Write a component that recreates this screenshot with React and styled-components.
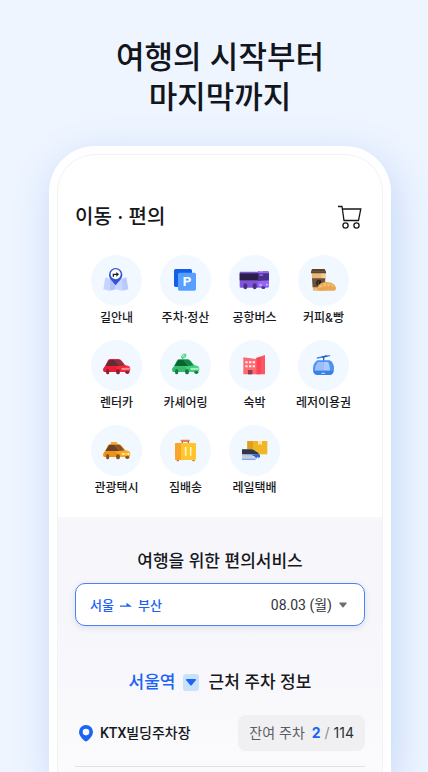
import React from "react";
import styled, { createGlobalStyle } from "styled-components";

const GlobalStyle = createGlobalStyle`
  * {
    box-sizing: border-box;
  }
  body {
    margin: 0;
    color: #17181c;
    font-family: Inter, "Noto Sans CJK KR", sans-serif;
    background: #eef5ff;
  }
  h1, h2, p, ul {
    margin: 0;
    padding: 0;
  }
  button {
    font-family: inherit;
    color: inherit;
    cursor: pointer;
  }
`;

// rent / sharing / taxi all use the same car with other colours
function Car({ body, shade, glass, glassDark, light, wheel }) {
  return (
    <>
      <path d="M37 86 L42 79 L51 61 Q53 57 58 57 L83 57 Q88 57 92 62 L102 75 L113 78 Q118 80 118 86 L117 93 Q116 96 112 96 L41 96 Q37 96 37 91 Z" fill={body} />
      <path d="M37 86 L42 79 L76 79 L80 96 L41 96 Q37 96 37 91 Z" fill={shade} />
      <path d="M43 78 L52 63 Q54 59 58 59 L70 59 L86 78 Z" fill={glassDark} />
      <path d="M70 59 L83 59 Q87 59 90 63 L101 76 L86 78 Z" fill={glass} />
      <path d="M91 84 L116 83 L116 89 L93 90 Z" fill={light} />
      <ellipse cx="50" cy="95" rx="5" ry="8" fill={wheel} />
      <ellipse cx="81" cy="95" rx="6" ry="8" fill={wheel} />
      <ellipse cx="109" cy="97" rx="6" ry="5" fill={wheel} />
    </>
  );
}

const icons = {
  map: (
    <>
      <path d="M43 67 L56 71 L56 107 L37 103 Z" fill="#c6d3ff" />
      <path d="M56 71 L74 67 L74 103 L56 107 Z" fill="#b3c4fd" />
      <path d="M74 67 L93 71 L94 107 L74 103 Z" fill="#c9d6ff" />
      <path d="M93 71 L106 67 L112 103 L94 107 Z" fill="#b9c9ff" />
      <path d="M74 91 C68 81 54 73 54 59 A20 20 0 0 1 94 59 C94 73 80 81 74 91 Z" fill="#2f55d4" />
      <circle cx="74" cy="58" r="15" fill="#fff" />
      <path d="M67 65 V58 H77" stroke="#1c1d22" strokeWidth="4" fill="none" />
      <path d="M76 51 L84 58 L76 65 Z" fill="#1c1d22" />
    </>
  ),
  parking: (
    <>
      <rect x="42" y="42" width="54" height="54" rx="5" fill="#1260e8" />
      <rect x="54" y="53" width="54" height="54" rx="5" fill="#58a0ff" />
      <text x="81" y="94" textAnchor="middle" fontSize="40" fontWeight="700" fontFamily="Roboto, sans-serif" fill="#fff">P</text>
    </>
  ),
  bus: (
    <>
      <path d="M32 53 Q32 50 35 50 H87 V98 H35 Q32 98 32 95 Z" fill="#8055dd" />
      <path d="M87 48 H116 Q120 48 120 53 V94 Q120 98 116 98 H87 Z" fill="#9467f7" />
      <rect x="32" y="55" width="55" height="21" fill="#2a1f45" />
      <path d="M87 55 H120 V76 L87 78 Z" fill="#49308a" />
      <path d="M91 50 H102 M91 60 H102" stroke="#b597ff" strokeWidth="3" />
      <path d="M91 90 H99 M111 89 H118" stroke="#ccb5ff" strokeWidth="4" />
      <ellipse cx="49" cy="94" rx="6" ry="9" fill="#4b3183" />
      <ellipse cx="77" cy="94" rx="6" ry="9" fill="#4b3183" />
      <ellipse cx="103" cy="98" rx="6" ry="4" fill="#4b3183" />
    </>
  ),
  coffee: (
    <>
      <path d="M41 54 H83 L79 107 H45 Z" fill="#e8b878" />
      <path d="M70 54 H83 L79 107 H70 Z" fill="#f3cd94" />
      <path d="M42 42 H80 L84 50 V55 H39 V50 Z" fill="#5b432e" />
      <path d="M40 50 H84" stroke="#7a5d42" strokeWidth="2" />
      <path d="M42 70 H82 L80 97 H44 Z" fill="#67523c" />
      <ellipse cx="62" cy="83" rx="7" ry="9" transform="rotate(22 62 83)" fill="#271c13" />
      <path d="M64 77 Q58 83 61 90" stroke="#846b4e" strokeWidth="2" fill="none" />
      <path d="M58 101 C58 88 71 81 86 81 C103 81 114 91 114 101 Q114 107 106 107 H65 Q58 107 58 101 Z" fill="#e9a552" />
      <path d="M61 99 C65 89 75 84 86 84 C98 84 107 89 110 96 Q88 90 61 99 Z" fill="#f5be70" />
      <path d="M73 87 L76 96 M85 84 L87 95 M97 86 L98 96" stroke="#d98c38" strokeWidth="2" />
    </>
  ),
  rent: <Car body="#f5293e" shade="#e91d36" glass="#83343d" glassDark="#652a33" light="#ff8b94" wheel="#88212f" />,
  share: (
    <>
      <Car body="#43ce7c" shade="#33bd6c" glass="#168346" glassDark="#0c6433" light="#a4f0c4" wheel="#187842" />
      <path d="M65 53 Q63 43 77 42 Q79 55 67 54 Z" fill="#caf4db" stroke="#3ccb76" strokeWidth="3" />
      <path d="M74 46 L66 57" stroke="#3ccb76" strokeWidth="3" />
    </>
  ),
  hotel: (
    <>
      <path d="M43 52 L82 57 V103 H43 Z" fill="#ff6971" />
      <path d="M82 54 L108 45 V103 H82 Z" fill="#ff5562" />
      <path d="M82 54 L95 50 V103 H82 Z" fill="#fb4456" />
      <path d="M49 67 H56 M60 67 H67 M71 67 H78 M49 79 H56 M60 79 H67 M71 79 H78" stroke="#fff0f0" strokeWidth="6" />
      <rect x="57" y="90" width="13" height="13" fill="#8e4145" />
    </>
  ),
  gondola: (
    <>
      <path d="M58 54 L95 47" stroke="#4588ea" strokeWidth="4" strokeLinecap="round" />
      <path d="M73 51 L86 48" stroke="#2560ca" strokeWidth="5" strokeLinecap="round" />
      <path d="M77 50 V63" stroke="#2860c8" strokeWidth="4" />
      <path d="M58 61 H95 Q108 68 108 85 Q108 105 94 105 H60 Q45 105 45 86 Q45 70 58 61 Z" fill="#4c92f4" />
      <path d="M60 66 H76 V92 H51 Q50 75 60 66 Z" fill="#9bbef5" />
      <path d="M76 66 H91 Q96 78 96 92 H76 Z" fill="#adcafa" />
      <path d="M46 92 H107 Q105 105 94 105 H60 Q48 105 46 92 Z" fill="#3a80e9" />
      <path d="M70 100 H81" stroke="#cce3ff" strokeWidth="3" />
    </>
  ),
  taxi: (
    <>
      <rect x="59" y="51" width="20" height="9" rx="3" fill="#f7a928" />
      <Car body="#fba91c" shade="#ef9316" glass="#885031" glassDark="#6c402b" light="#ffc857" wheel="#87502b" />
      <circle cx="96" cy="87" r="3" fill="#fff6cf" />
      <circle cx="112" cy="87" r="3" fill="#fff6cf" />
    </>
  ),
  luggage: (
    <>
      <path d="M67 56 V48 H85 V56" stroke="#b6682f" strokeWidth="4" fill="none" />
      <path d="M62 47 H89" stroke="#e8805a" strokeWidth="5" />
      <rect x="45" y="54" width="63" height="51" rx="4" fill="#ffc52c" />
      <path d="M49 54 H63 V105 H49 Q45 105 45 101 V58 Q45 54 49 54 Z" fill="#f9a42a" />
      <path d="M77 66 V92 M92 66 V92" stroke="#fff4c5" strokeWidth="5" />
      <path d="M50 107 H57 M97 107 H104" stroke="#d9772a" strokeWidth="4" />
    </>
  ),
  delivery: (
    <>
      <rect x="55" y="48" width="60" height="40" fill="#f1b626" />
      <rect x="55" y="48" width="17" height="40" fill="#dda11d" />
      <path d="M87 48 H99 V60 L93 57 L87 60 Z" fill="#ffe6a3" />
      <path d="M39 73 H68 Q85 78 93 91 Q94 98 87 102 H39 Z" fill="#c6d0e3" />
      <path d="M39 73 H68 Q84 78 92 89 L39 87 Z" fill="#303746" />
      <path d="M68 89 L92 89 Q96 96 89 98 H79 L73 93 Z" fill="#2464dc" />
      <path d="M39 89 H68" stroke="#7f9fd8" strokeWidth="2" />
      <path d="M73 94 L79 98 M88 97 L84 99" stroke="#fff" strokeWidth="3" />
      <path d="M39 103 H80" stroke="#6997e9" strokeWidth="3" />
    </>
  ),
};

const services = [
  { icon: "map", label: "길안내" },
  { icon: "parking", label: "주차·정산" },
  { icon: "bus", label: "공항버스" },
  { icon: "coffee", label: "커피&빵" },
  { icon: "rent", label: "렌터카" },
  { icon: "share", label: "카셰어링" },
  { icon: "hotel", label: "숙박" },
  { icon: "gondola", label: "레저이용권" },
  { icon: "taxi", label: "관광택시" },
  { icon: "luggage", label: "짐배송" },
  { icon: "delivery", label: "레일택배" },
];

function App() {
  return (
    <>
      <GlobalStyle />
      <Page>
        <Title>
          여행의 시작부터
          <br />
          마지막까지
        </Title>

        <Phone>
          <Screen>
            <Header>
              <HeaderTitle>이동 · 편의</HeaderTitle>
              <CartButton type="button" aria-label="장바구니">
                <svg width="24" height="24" viewBox="0 0 24 24" fill="none" stroke="#17181c" strokeWidth="1.3">
                  <path d="M0 1.5 H4 L6 15.5 H20.5 L22.8 4 H4.4" />
                  <circle cx="7.5" cy="20.5" r="2.6" />
                  <circle cx="18.5" cy="20.5" r="2.6" />
                </svg>
              </CartButton>
            </Header>

            <ServiceGrid>
              {services.map((s) => (
                <li key={s.icon}>
                  <Service href="#">
                    <IconCircle viewBox="0 0 153 153" aria-hidden="true">
                      {icons[s.icon]}
                    </IconCircle>
                    {s.label}
                  </Service>
                </li>
              ))}
            </ServiceGrid>

            <Travel>
              <SectionTitle>여행을 위한 편의서비스</SectionTitle>
              <TripButton type="button">
                <Route>
                  서울
                  <svg width="12" height="6" viewBox="0 0 12 6" aria-hidden="true">
                    <path d="M0 4.8 H12 L6.5 0.8 V3.6 H0 Z" fill="#1b64f5" />
                  </svg>
                  부산
                </Route>
                <TripDate>
                  08.03 (월)
                  <svg width="8" height="6" viewBox="0 0 8 6" aria-hidden="true">
                    <path d="M0.8 0.5 H7.2 Q8 0.6 7.5 1.4 L4.5 5.2 Q4 5.6 3.5 5.2 L0.5 1.4 Q0 0.6 0.8 0.5 Z" fill="#6b6c74" />
                  </svg>
                </TripDate>
              </TripButton>

              <StationTitle>
                <Blue>서울역</Blue>
                <StationButton type="button" aria-label="역 선택">
                  <svg width="10" height="7" viewBox="0 0 10 7">
                    <path d="M0.8 0 H9.2 Q10.3 0.2 9.7 1.2 L5.7 6.2 Q5 6.8 4.3 6.2 L0.3 1.2 Q-0.3 0.2 0.8 0 Z" fill="#1b64f5" />
                  </svg>
                </StationButton>
                근처 주차 정보
              </StationTitle>

              <ParkingRow>
                <ParkingName>
                  <svg width="14" height="17" viewBox="0 0 14 17" aria-hidden="true">
                    <path d="M7 16.6 C6 16.6 0 11.5 0 7 A7 7 0 0 1 14 7 C14 11.5 8 16.6 7 16.6 Z M7 3.8 A3.3 3.3 0 1 0 7 10.4 A3.3 3.3 0 1 0 7 3.8 Z" fill="#1b64f5" fillRule="evenodd" />
                  </svg>
                  KTX빌딩주차장
                </ParkingName>
                <Remain>
                  잔여 주차
                  <Count>
                    <b>2</b> <i>/</i> 114
                  </Count>
                </Remain>
              </ParkingRow>
            </Travel>
          </Screen>
        </Phone>
      </Page>
    </>
  );
}

export default App;

const Page = styled.main`
  display: flex;
  flex-direction: column;
  min-height: 100vh;
  padding: 37px 37px 0 49px;
  overflow: hidden;
  background: #eef5ff;
`;

const Title = styled.h1`
  font-size: 31px;
  line-height: 40px;
  font-weight: 500;
  text-align: center;
  color: #12151c;
`;

const Phone = styled.div`
  display: flex;
  flex: 1;
  margin-top: 29px;
  padding: 8px 8px 0;
  border-radius: 46px 46px 0 0;
  background: #fff;
  box-shadow: 4px 12px 40px rgba(60, 115, 225, 0.24);
`;

const Screen = styled.div`
  display: flex;
  flex: 1;
  flex-direction: column;
  min-width: 0;
  overflow: hidden;
  border: 1px solid #f2f2f5;
  border-bottom: 0;
  border-radius: 38px 38px 0 0;
`;

const Header = styled.header`
  display: flex;
  align-items: center;
  justify-content: space-between;
  padding: 47px 20px 0 17px;
`;

const HeaderTitle = styled.h2`
  font-size: 20px;
  line-height: 30px;
  font-weight: 500;
`;

const CartButton = styled.button`
  display: flex;
  padding: 0;
  border: 0;
  background: none;
`;

const ServiceGrid = styled.ul`
  display: grid;
  grid-template-columns: repeat(4, 1fr);
  row-gap: 12px;
  padding: 23px 24px 19px;
  list-style: none;
`;

const Service = styled.a`
  display: flex;
  flex-direction: column;
  align-items: center;
  gap: 2px;
  font-size: 12px;
  line-height: 20px;
  font-weight: 500;
  color: #17181c;
  white-space: nowrap;
  text-decoration: none;
`;

const IconCircle = styled.svg`
  width: 51px;
  height: 51px;
  border-radius: 50%;
  background: #f1f8ff;
`;

const Travel = styled.section`
  flex: 1;
  padding: 32px 17px 5px;
  background: linear-gradient(#f6f6fb 40%, #fbfbfd);
`;

const SectionTitle = styled.h2`
  font-size: 17px;
  line-height: 24px;
  font-weight: 500;
  text-align: center;
`;

const TripButton = styled.button`
  display: flex;
  align-items: center;
  justify-content: space-between;
  width: 100%;
  height: 43px;
  margin-top: 10px;
  padding: 0 17px 0 14px;
  border: 1px solid #4a82f5;
  border-radius: 10px;
  background: #fff;
  box-shadow: 0 2px 6px rgba(40, 60, 120, 0.12);
  font-size: 14px;
  line-height: 20px;
`;

const Route = styled.span`
  display: flex;
  align-items: center;
  gap: 6px;
  font-size: 13px;
  font-weight: 500;
  color: #1b64f5;
`;

const TripDate = styled.span`
  display: flex;
  align-items: center;
  gap: 7px;
  font-family: Roboto, "Noto Sans CJK KR", sans-serif;
  color: #33343a;
`;

const StationTitle = styled.h2`
  display: flex;
  align-items: center;
  justify-content: center;
  margin-top: 44px;
  font-size: 17px;
  line-height: 24px;
  font-weight: 500;
`;

const Blue = styled.span`
  color: #1b64f5;
`;

const StationButton = styled.button`
  display: flex;
  align-items: center;
  justify-content: center;
  width: 16px;
  height: 17px;
  margin: 0 10px 0 7px;
  padding: 0;
  border: 0;
  border-radius: 3px;
  background: #c9e2fb;
`;

const ParkingRow = styled.div`
  display: flex;
  align-items: center;
  justify-content: space-between;
  margin-top: 21px;
  padding-bottom: 15px;
  border-bottom: 1px solid #dfdfe4;
`;

const ParkingName = styled.p`
  display: flex;
  align-items: center;
  gap: 7px;
  padding-left: 4px;
  font-family: Roboto, "Noto Sans CJK KR", sans-serif;
  font-size: 14px;
  line-height: 20px;
  font-weight: 500;
`;

const Remain = styled.p`
  display: flex;
  gap: 7px;
  padding: 8px 11px;
  border-radius: 8px;
  background: #f0f0f3;
  font-size: 14px;
  line-height: 20px;
  color: #5b5c64;
`;

const Count = styled.span`
  color: #2c2d33;

  b {
    font-weight: 700;
    color: #1b64f5;
  }
  i {
    font-style: normal;
    color: #8b8c94;
  }
`;
